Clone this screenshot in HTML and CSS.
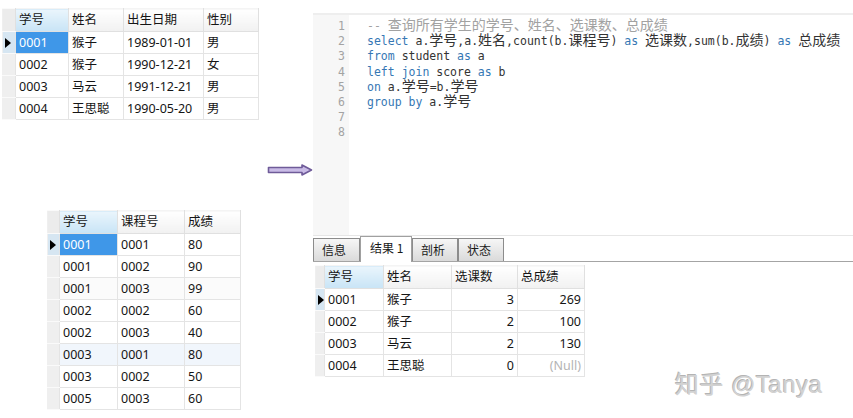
FILE: index.html
```html
<!DOCTYPE html>
<html>
<head>
<meta charset="utf-8">
<link rel="stylesheet" href="styles.css">
</head>
<body>
<div class="page">
  <div class="left">
    <table class="grid t1">
      <colgroup><col class="w13"><col class="w53"><col class="w55"><col class="w80"><col class="w55"></colgroup>
      <thead><tr><th class="ind"></th><th class="hl">学号</th><th>姓名</th><th>出生日期</th><th>性别</th></tr></thead>
      <tbody>
        <tr><td class="ind cur"><svg class="tri" width="6" height="10" viewBox="0 0 6 10"><polygon points="0,0 6,5 0,10" fill="#000"/></svg></td><td class="sel">0001</td><td>猴子</td><td>1989-01-01</td><td>男</td></tr>
        <tr><td class="ind"></td><td>0002</td><td>猴子</td><td>1990-12-21</td><td>女</td></tr>
        <tr><td class="ind"></td><td>0003</td><td>马云</td><td>1991-12-21</td><td>男</td></tr>
        <tr><td class="ind"></td><td>0004</td><td>王思聪</td><td>1990-05-20</td><td>男</td></tr>
      </tbody>
    </table>

    <table class="grid t2">
      <colgroup><col class="w12"><col class="w58"><col class="w67"><col class="w56"></colgroup>
      <thead><tr><th class="ind"></th><th class="hl">学号</th><th>课程号</th><th>成绩</th></tr></thead>
      <tbody>
        <tr><td class="ind cur"><svg class="tri" width="6" height="10" viewBox="0 0 6 10"><polygon points="0,0 6,5 0,10" fill="#000"/></svg></td><td class="sel">0001</td><td>0001</td><td>80</td></tr>
        <tr><td class="ind"></td><td>0001</td><td>0002</td><td>90</td></tr>
        <tr class="tint-gray"><td class="ind"></td><td>0001</td><td>0003</td><td>99</td></tr>
        <tr><td class="ind"></td><td>0002</td><td>0002</td><td>60</td></tr>
        <tr><td class="ind"></td><td>0002</td><td>0003</td><td>40</td></tr>
        <tr class="tint-blue"><td class="ind"></td><td>0003</td><td>0001</td><td>80</td></tr>
        <tr><td class="ind"></td><td>0003</td><td>0002</td><td>50</td></tr>
        <tr><td class="ind"></td><td>0005</td><td>0003</td><td>60</td></tr>
      </tbody>
    </table>
  </div>

  <div class="arrow-col">
    <svg class="arrow" width="46" height="12" viewBox="0 0 46 12">
      <path d="M1.5,3.5 H35 V1 L44.5,6 L35,11 V8.5 H1.5 Z" fill="#c9bbe6" stroke="#6f5b99" stroke-width="1.6" stroke-linejoin="round"/>
    </svg>
  </div>

  <div class="right">
    <div class="editor">
      <div class="gutter">
        <div class="ln">1</div><div class="ln">2</div><div class="ln">3</div><div class="ln">4</div><div class="ln">5</div><div class="ln">6</div><div class="ln">7</div><div class="ln">8</div>
      </div>
      <div class="code">
        <div class="line"><span class="cm">-- <span class="cj">查询所有学生的学号、姓名、选课数、总成绩</span></span></div>
        <div class="line"><span class="kw">select</span> a.<span class="cj">学号</span>,a.<span class="cj">姓名</span>,count(b.<span class="cj">课程号</span>) <span class="kw">as</span> <span class="cj">选课数</span>,sum(b.<span class="cj">成绩</span>) <span class="kw">as</span> <span class="cj">总成绩</span></div>
        <div class="line"><span class="kw">from</span> student <span class="kw">as</span> a</div>
        <div class="line"><span class="kw">left</span> <span class="kw">join</span> score <span class="kw">as</span> b</div>
        <div class="line"><span class="kw">on</span> a.<span class="cj">学号</span>=b.<span class="cj">学号</span></div>
        <div class="line"><span class="kw">group</span> <span class="kw">by</span> a.<span class="cj">学号</span></div>
        <div class="line"></div>
        <div class="line"></div>
      </div>
    </div>

    <div class="tabs">
      <div class="tab">信息</div>
      <div class="tab active">结果 1</div>
      <div class="tab">剖析</div>
      <div class="tab">状态</div>
    </div>

    <table class="grid t3">
      <colgroup><col class="w9"><col class="w59"><col class="w68"><col class="w66"><col class="w67"></colgroup>
      <thead><tr><th class="ind"></th><th class="hl">学号</th><th>姓名</th><th>选课数</th><th>总成绩</th></tr></thead>
      <tbody>
        <tr><td class="ind cur"><svg class="tri" width="6" height="10" viewBox="0 0 6 10"><polygon points="0,0 6,5 0,10" fill="#000"/></svg></td><td>0001</td><td>猴子</td><td class="num">3</td><td class="num">269</td></tr>
        <tr><td class="ind"></td><td>0002</td><td>猴子</td><td class="num">2</td><td class="num">100</td></tr>
        <tr><td class="ind"></td><td>0003</td><td>马云</td><td class="num">2</td><td class="num">130</td></tr>
        <tr><td class="ind"></td><td>0004</td><td>王思聪</td><td class="num">0</td><td class="num null">(Null)</td></tr>
      </tbody>
    </table>
  </div>

  <div class="wm">知乎 @Tanya</div>
</div>
</body>
</html>
```

FILE: styles.css
```css
* { box-sizing: border-box; }
html, body { margin: 0; background: #fff; }

.page {
  position: relative;
  width: 853px;
  height: 418px;
  display: flex;
  overflow: hidden;
  font-family: "Noto Sans", "Noto Sans CJK SC", sans-serif;
  font-size: 12.5px;
  color: #151515;
}

/* ---------- grids ---------- */
.left { width: 268px; flex: none; }

.grid { border-collapse: collapse; table-layout: fixed; }
.grid th, .grid td {
  height: 22px;
  padding: 0 3px;
  border: 1px solid #e4e4e4;
  text-align: left;
  font-weight: normal;
  white-space: nowrap;
  overflow: hidden;
  line-height: 20px;
}
.grid th {
  height: 23px;
  background: linear-gradient(#ffffff, #f1f1f1);
  border-color: #e0e0e0;
  border-top-color: #f4f4f4;
}
.grid th.hl { background: linear-gradient(#eaf5fc, #c8e4f6); }
.grid .ind {
  padding: 0;
  background: #efefef;
  border-left-color: #efefef;
  border-top-color: #fafafa;
  border-bottom-color: #fafafa;
}
.grid th.ind { background: #ececec; }
.grid td.cur { background: #d6e6f2; }
.tri { display: block; margin: 0 auto 0 2px; }
.grid td.sel { background: #3f97e8; color: #fff; }
.grid td.num { text-align: right; }
.grid td.null { color: #b4b4b4; }
.tint-blue td { background: #f1f6fc; }
.tint-gray td { background: #fbfbfb; }

.t1 { width: 256px; margin: 8px 0 0 2px; }
.t2 { width: 193px; margin: 90px 0 0 47px; }
.t3 { width: 269px; margin: 3px 0 0 2px; }

.w9 { width: 9px; }
.w12 { width: 12px; }
.w13 { width: 13px; }
.w53 { width: 53px; }
.w55 { width: 55px; }
.w56 { width: 56px; }
.w58 { width: 58px; }
.w59 { width: 59px; }
.w66 { width: 66px; }
.w67 { width: 67px; }
.w68 { width: 68px; }
.w80 { width: 80px; }

/* ---------- arrow ---------- */
.arrow-col { width: 45px; flex: none; padding-top: 164px; }
.arrow { display: block; margin-left: -1px; }

/* ---------- editor ---------- */
.right { flex: 1; padding-top: 13px; min-width: 0; }

.editor {
  height: 223px;
  display: flex;
  border-top: 2px solid #eeeeee;
  border-bottom: 1px solid #e6e6e6;
  font-family: "DejaVu Sans Mono", "Liberation Mono", monospace;
  font-size: 11.5px;
}
.gutter {
  width: 36px;
  flex: none;
  background: #f7f7f7;
  padding: 4px 4px 0 0;
  text-align: right;
  color: #a3a3a3;
}
.code {
  flex: 1;
  padding: 4px 0 0 18px;
  color: #333;
  overflow: hidden;
}
.ln, .line { height: 15.2px; line-height: 15px; }
.line { white-space: pre; }
.cj { font-family: "Noto Sans CJK SC", sans-serif; font-size: 14px; line-height: 0; }
.kw { color: #3677b4; }
.cm { color: #a2a2a2; }

/* ---------- tabs ---------- */
.tabs {
  height: 26px;
  display: flex;
  align-items: flex-end;
  border-bottom: 1px solid #a4a4a4;
  font-family: "Noto Sans CJK SC", sans-serif;
  font-size: 12px;
}
.tab {
  height: 23px;
  padding: 0 0 0 8px;
  line-height: 21px;
  background: linear-gradient(#f6f6f6, #dadada);
  border: 1px solid #8c8c8c;
  border-bottom: none;
  width: 46px;
  color: #1a1a1a;
}
.tab:first-child { width: 47px; }
.tab.active {
  height: 26px;
  margin-bottom: -1px;
  width: 52px;
  background: #fff;
  border-color: #a0a0a0;
  line-height: 22px;
  padding-left: 9px;
}

/* ---------- watermark ---------- */
.wm {
  position: absolute;
  left: 675px;
  top: 365px;
  font-family: "Liberation Sans", "Noto Sans CJK SC", sans-serif;
  font-size: 24px;
  letter-spacing: 0.5px;
  color: #d2d2d2;
  text-shadow: -1px -1px 0 #b4b4b4;
}
```
